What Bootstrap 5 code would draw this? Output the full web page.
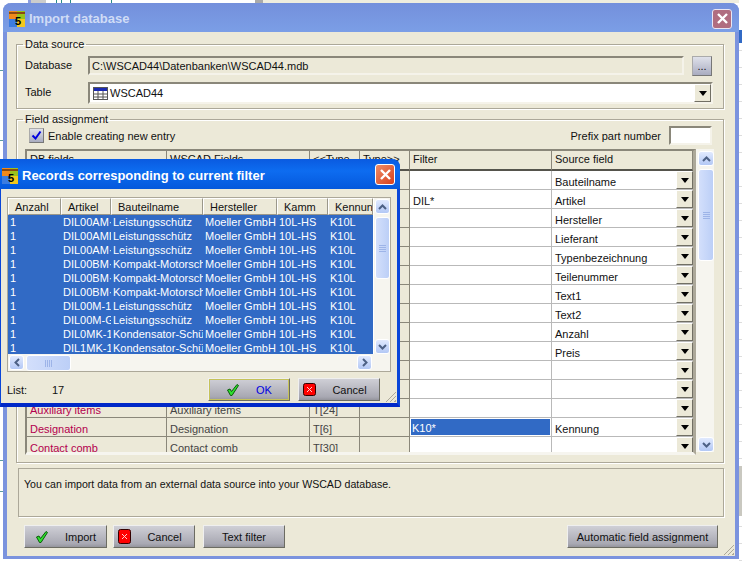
<!DOCTYPE html>
<html lang="en">
<head>
  <meta charset="UTF-8" />
  <title>Import database</title>
  <link href="https://cdn.jsdelivr.net/npm/bootstrap@5.3.0/dist/css/bootstrap.min.css" rel="stylesheet" />
  <style>
    html, body { height: 562px; overflow: hidden; }
    body { position: relative; background: #fff; font: 11px/14px "Liberation Sans", Arial, sans-serif; color: #111; }
    .back-top { position: absolute; left: 0; top: 0; width: 742px; height: 3px; background: linear-gradient(90deg, #fff 28px, #8d9ee0 28px 31px, #ccc 31px 46px, #fff 46px 56px, #2a8a8a 56px 57px, #fff 57px 61px, #2a8a8a 61px 62px, #fff 62px 70px, #2a8a8a 70px 71px, #fff 71px 111px, #2a8a8a 111px 112px, #fff 112px 255px, #aaa 255px 263px, #efedde 263px); }
    .back-right { position: absolute; left: 739px; top: 0; width: 3px; height: 562px; background: linear-gradient(#fff 30px, #316ac5 30px 43px, transparent 43px), linear-gradient(transparent 466px, #c9c8c0 466px 516px, transparent 516px), repeating-linear-gradient(#fff 0 16px, #ddd 16px 17px); }
    .back-left { position: absolute; left: 0; top: 0; width: 3px; height: 562px; background: linear-gradient(transparent 70px, #5a9aa0 70px 71px, transparent 71px 140px, #5a9aa0 140px 141px, transparent 141px 460px, #5a9aa0 460px 461px, transparent 461px 491px, #5a9aa0 491px 492px, transparent 492px); }
    .main-win { position: absolute; left: 3px; top: 3px; width: 736px; height: 556px; background: #ece9d8; border: solid #7b93de; border-width: 0 4px 3px; border-radius: 8px 8px 0 0; }
    .main-title { height: 29px; margin: 0 -4px; padding: 2px 6px 0; background: linear-gradient(#7490dc, #7b9ee6); border-radius: 8px 8px 0 0; color: #d0dcf6; font: bold 13px "Liberation Sans", sans-serif; }
    .close-dim { width: 20px; height: 20px; background: #b06d80; border: 1px solid #e9e6f4; border-radius: 3px; margin-right: 1px; }
    .close-hot { width: 20px; height: 21px; background: linear-gradient(135deg, #ee8d68, #d8401c); border: 1px solid #fff; border-radius: 3px; margin: -3px 2px 0 0; }
    .group-box { position: relative; border: 1px solid #aca899; box-shadow: inset 1px 1px #fff, 1px 1px #fff; min-width: 0; }
    .group-box > legend { float: none; width: auto; font: inherit; margin: 0 0 0 -2px; padding: 0 2px; }
    .source-box { margin: 5px 11px 0 9px; height: 72px; padding: 5px 10px 0 8px; }
    .fields-box { margin: 3px 11px 0 9px; height: 351px; padding: 0 9px 0 8px; }
    .info-box { margin: 5px 11px 0 11px; height: 49px; padding: 8px 5px; border: 1px solid #aca899; box-shadow: 1px 1px #fff; font-size: 10.600px; }
    .field-label { width: 63px; flex-shrink: 0; margin-top: -3px; }
    .table-row { margin-top: 6px; }
    .sunken { border: 2px solid; border-color: #8a877a #f5f3ea #f5f3ea #8a877a; padding: 0 1px; }
    .db-path { height: 19px; margin-bottom: 1px; padding-left: 2px; }
    .table-pick { height: 22px; padding-left: 3px; padding-right: 0; gap: 2px; }
    .sys-btn { background: linear-gradient(#dfe1ea, #a9acc0); border: 1px solid #aaa; border-right-color: #777; border-bottom-color: #777; }
    .dots-btn { width: 20px; height: 20px; margin-left: 8px; margin-right: 1px; }
    .tick-box { width: 15px; height: 15px; }
    .prefix-box { width: 43px; height: 19px; margin-right: 2px; }
    .drop-btn { width: 17px; flex-shrink: 0; background: #ece9d8; border: 1px solid; border-color: #fff #716f64 #716f64 #fff; }
    .drop-btn::after { content: ""; border: 4px solid transparent; border-top: 5px solid #000; border-bottom: 0; }
    .grid-view { width: 671px; height: 306px; flex-shrink: 0; overflow: hidden; border-left: 2px solid #8a877a; border-top: 2px solid #8a877a; border-right: 3px solid #aca899; border-bottom: 3px solid #f6f5ef; background: #ece9d8; }
    .grid-table { table-layout: fixed; border-collapse: separate; border-spacing: 0; width: 666px; background: #fff; }
    .grid-table th { height: 20px; background: #ece9d8; font-weight: 400; border-right: 1px solid #8a877a; border-bottom: 2px solid #55544c; padding: 0 3px 3px; white-space: nowrap; }
    .grid-table td { height: 19px; padding: 4px 3px 0; vertical-align: top; border-right: 1px solid #b9b9b9; border-bottom: 1px solid #b9b9b9; white-space: nowrap; overflow: hidden; }
    .grid-table td.fixed-cell { background: #ece9d8; border-color: #8a877a; color: #444; }
    .grid-table td.db-cell { color: #b3004d; }
    .grid-table td.pick-cell { padding: 0; border-right: 0; }
    .grid-table td.hit-cell { padding: 1px 1px 0 1px; }
    .hit-text { display: block; background: #316ac5; color: #fff; height: 16px; line-height: 18px; padding-left: 1px; }
    .pick-box { height: 18px; padding-left: 3px; }
    .pick-box > span:first-child { padding-top: 4px; }
    .v-bar { width: 18px; background: #f6f5ef; padding: 2px 0 0 2px; }
    .main-bar { height: 303px; }
    .bar-arrow { height: 15px; flex-shrink: 0; background: linear-gradient(#e1eafe, #b3c8f5); border: 1px solid #fff; border-radius: 3px; }
    .bar-thumb { background: linear-gradient(90deg, #d3dffb, #bccff7); border: 1px solid #fff; border-radius: 3px; margin-top: 3px; }
    .win-btn { height: 23px; background: linear-gradient(#cfcfd6, #a8a8b2 85%, #94949c); border: 1px solid; border-color: #efefef #6c6c62 #6c6c62 #efefef; padding: 0; font-size: 11px; color: #111; border-radius: 0; }
    .win-btn.is-default { box-shadow: inset 0 0 0 1px #c5c25a; color: #0000e0; }
    .foot-row { padding: 8px 17px 0 17px; }
    .tight-left { margin-left: -2px; }
    .shift-left { padding-right: 8px; }
    .dialog-win { position: absolute; left: 0; top: 159px; width: 400px; height: 248px; background: #ece9d8; border: solid #0a46d8; border-width: 0 3px 4px 1px; border-bottom-color: #0028c8; border-radius: 0 8px 0 0; }
    .dialog-title { height: 30px; padding: 3px 3px 0 2px; margin: 0 -3px 0 -1px; background: linear-gradient(#0a5ae0, #0d6cf0 40%, #0458dc); border-radius: 0 8px 0 0; color: #fff; font: bold 13px "Liberation Sans", sans-serif; }
    .records-box { margin: 8px 6px 0 6px; height: 175px; background: #fff; border: 1px solid #aca899; }
    .records-top { height: 156px; }
    .records-view { width: 366px; overflow: hidden; }
    .records-table { table-layout: fixed; border-collapse: separate; border-spacing: 0; width: 365px; color: #fff; background: #316ac5; }
    .records-table th { height: 17px; background: #ece9d8; color: #111; font-weight: 400; border: 1px solid; border-color: #fff #9a978a #9a978a #fff; padding: 0 0 0 6px; white-space: nowrap; overflow: hidden; }
    .records-table td { height: 14px; padding: 0 0 0 2px; white-space: nowrap; overflow: hidden; }
    .records-bar { padding: 1px 0 0 1px; width: 16px; }
    .h-bar { height: 17px; padding: 1px 18px 0 1px; background: #f6f5ef; }
    .h-arrow { width: 15px; height: 15px; }
    .h-thumb { width: 45px; margin: 0 0 0 2px; }
    .dialog-foot { padding: 6px 17px 0 6px; }
    .list-count { width: 45px; }
    .grip { position: absolute; right: 1px; bottom: 1px; width: 11px; height: 11px; background: repeating-linear-gradient(135deg, transparent 0 2px, #aca899 2px 3px); clip-path: polygon(100% 0, 100% 100%, 0 100%); }
    .w-82 { width: 82px; }
  </style>
</head>
<body>
  <div class="back-top"></div>
  <div class="back-right"></div>
  <div class="back-left"></div>

  <div class="main-win">
    <div class="main-title d-flex align-items-center gap-1">
      <svg width="16" height="16" viewBox="0 0 16 16"><rect width="8" height="8" fill="#f08a1c"/><rect x="8" width="8" height="8" fill="#9ac21c"/><rect y="8" width="8" height="8" fill="#3c7ce0"/><rect x="8" y="8" width="8" height="8" fill="#f4c81c"/><rect y="1" width="16" height="2" fill="#8a4a10"/><text x="9" y="14" font-size="11" font-weight="700" text-anchor="middle" font-family="Liberation Sans">5</text></svg>
      <span class="flex-grow-1">Import database</span>
      <span class="close-dim d-flex align-items-center justify-content-center">
        <svg width="11" height="11" viewBox="0 0 11 11"><path d="M1 1l9 9M10 1l-9 9" stroke="#fff" stroke-width="2.400"/></svg>
      </span>
    </div>

    <fieldset class="group-box source-box">
      <legend>Data source</legend>
      <div class="d-flex align-items-center">
        <span class="field-label">Database</span>
        <div class="sunken db-path flex-grow-1 d-flex align-items-center">C:\WSCAD44\Datenbanken\WSCAD44.mdb</div>
        <span class="sys-btn dots-btn d-flex align-items-center justify-content-center">...</span>
      </div>
      <div class="table-row d-flex align-items-center">
        <span class="field-label">Table</span>
        <div class="sunken table-pick flex-grow-1 d-flex align-items-center bg-white">
          <svg width="15" height="13" viewBox="0 0 15 13"><rect x=".5" y=".5" width="14" height="12" fill="#fff" stroke="#555"/><rect x="1" y="1" width="13" height="3" fill="#1c2ab0"/><path d="M1 7h13M1 10h13M5 4v8M10 4v8" stroke="#555"/></svg>
          <span class="flex-grow-1">WSCAD44</span>
          <span class="drop-btn d-flex align-items-center justify-content-center align-self-stretch"></span>
        </div>
      </div>
    </fieldset>

    <fieldset class="group-box fields-box">
      <legend>Field assignment</legend>
      <div class="d-flex align-items-center justify-content-between">
        <div class="d-flex align-items-center gap-1">
          <span class="sys-btn tick-box d-flex align-items-center justify-content-center ms-1">
            <svg width="11" height="11" viewBox="0 0 11 11"><path d="M1.500 5.500l3 3 5-7" fill="none" stroke="#0000e0" stroke-width="2"/></svg>
          </span>
          <span>Enable creating new entry</span>
        </div>
        <div class="d-flex align-items-center gap-2">
          <span>Prefix part number</span>
          <span class="sunken prefix-box bg-white"></span>
        </div>
      </div>
      <div class="d-flex mt-1">
        <div class="grid-view">
          <table class="grid-table">
            <colgroup><col style="width:140px"><col style="width:143px"><col style="width:50px"><col style="width:50px"><col style="width:142px"><col style="width:141px"></colgroup>
            <thead><tr><th>DB fields</th><th>WSCAD Fields</th><th>&lt;&lt;Type</th><th>Type&gt;&gt;</th><th>Filter</th><th>Source field</th></tr></thead>
            <tbody id="gridRows"></tbody>
          </table>
        </div>
        <div class="v-bar main-bar d-flex flex-column">
          <div class="bar-arrow d-flex align-items-center justify-content-center"><svg width="9" height="6" viewBox="0 0 9 6"><path d="M1 5l3.500-3.500L8 5" fill="none" stroke="#4d6185" stroke-width="2"/></svg></div>
          <div class="bar-thumb d-flex align-items-center justify-content-center" style="height:92px"><svg width="7" height="7" viewBox="0 0 7 7"><path d="M0 .5h7M0 2.500h7M0 4.500h7M0 6.500h7" stroke="#9db4e8"/></svg></div>
          <div class="flex-grow-1"></div>
          <div class="bar-arrow d-flex align-items-center justify-content-center"><svg width="9" height="6" viewBox="0 0 9 6"><path d="M1 1l3.500 3.500L8 1" fill="none" stroke="#4d6185" stroke-width="2"/></svg></div>
        </div>
      </div>
    </fieldset>

    <div class="info-box">You can import data from an external data source into your WSCAD database.</div>

    <div class="foot-row d-flex gap-2">
      <button type="button" class="win-btn d-flex align-items-center justify-content-center gap-3" style="width:83px">
        <svg width="14" height="14" viewBox="0 0 14 14"><path d="M1.500 7l2.500-1 1.500 2.500L11 1.500l1.500 1L6 12.500h-1.500z" fill="#2ee02e" stroke="#0a5a0a"/></svg>Import
      </button>
      <button type="button" class="win-btn w-82 tight-left shift-left d-flex align-items-center justify-content-center gap-3">
        <svg width="13" height="15" viewBox="0 0 13 15"><rect x=".5" y=".5" width="12" height="14" rx="2" fill="#f00" stroke="#300"/><path d="M4 5l5 5M9 5l-5 5" stroke="#fcc"/></svg>Cancel
      </button>
      <button type="button" class="win-btn w-82">Text filter</button>
      <button type="button" class="win-btn ms-auto" style="width:151px">Automatic field assignment</button>
    </div>
    <span class="grip"></span>
  </div>

  <div class="dialog-win">
    <div class="dialog-title d-flex align-items-center gap-1">
      <svg width="16" height="16" viewBox="0 0 16 16"><rect width="8" height="8" fill="#f08a1c"/><rect x="8" width="8" height="8" fill="#9ac21c"/><rect y="8" width="8" height="8" fill="#3c7ce0"/><rect x="8" y="8" width="8" height="8" fill="#f4c81c"/><rect y="1" width="16" height="2" fill="#8a4a10"/><text x="9" y="14" font-size="11" font-weight="700" text-anchor="middle" font-family="Liberation Sans">5</text></svg>
      <span class="flex-grow-1">Records corresponding to current filter</span>
      <span class="close-hot d-flex align-items-center justify-content-center">
        <svg width="11" height="11" viewBox="0 0 11 11"><path d="M1 1l9 9M10 1l-9 9" stroke="#fff" stroke-width="2.400"/></svg>
      </span>
    </div>
    <div class="records-box d-flex flex-column">
      <div class="records-top d-flex">
        <div class="records-view">
          <table class="records-table">
            <colgroup><col style="width:53px"><col style="width:50px"><col style="width:92px"><col style="width:74px"><col style="width:51px"><col style="width:45px"></colgroup>
            <thead><tr><th>Anzahl</th><th>Artikel</th><th>Bauteilname</th><th>Hersteller</th><th>Kamm</th><th>Kennun</th></tr></thead>
            <tbody id="recordRows"></tbody>
          </table>
        </div>
        <div class="v-bar records-bar d-flex flex-column">
          <div class="bar-arrow d-flex align-items-center justify-content-center"><svg width="9" height="6" viewBox="0 0 9 6"><path d="M1 5l3.500-3.500L8 5" fill="none" stroke="#4d6185" stroke-width="2"/></svg></div>
          <div class="bar-thumb d-flex align-items-center justify-content-center" style="height:62px"><svg width="7" height="7" viewBox="0 0 7 7"><path d="M0 .5h7M0 2.500h7M0 4.500h7M0 6.500h7" stroke="#9db4e8"/></svg></div>
          <div class="flex-grow-1"></div>
          <div class="bar-arrow d-flex align-items-center justify-content-center"><svg width="9" height="6" viewBox="0 0 9 6"><path d="M1 1l3.500 3.500L8 1" fill="none" stroke="#4d6185" stroke-width="2"/></svg></div>
        </div>
      </div>
      <div class="h-bar d-flex">
        <div class="bar-arrow h-arrow d-flex align-items-center justify-content-center"><svg width="6" height="9" viewBox="0 0 6 9"><path d="M5 1L1.500 4.500 5 8" fill="none" stroke="#4d6185" stroke-width="2"/></svg></div>
        <div class="bar-thumb h-thumb d-flex align-items-center justify-content-center"><svg width="7" height="7" viewBox="0 0 7 7"><path d="M.5 0v7M2.500 0v7M4.500 0v7M6.500 0v7" stroke="#9db4e8"/></svg></div>
        <div class="flex-grow-1"></div>
        <div class="bar-arrow h-arrow d-flex align-items-center justify-content-center"><svg width="6" height="9" viewBox="0 0 6 9"><path d="M1 1l3.500 3.500L1 8" fill="none" stroke="#4d6185" stroke-width="2"/></svg></div>
      </div>
    </div>
    <div class="dialog-foot d-flex align-items-center">
      <span class="list-count">List:</span>
      <span class="flex-grow-1">17</span>
      <button type="button" class="win-btn is-default d-flex align-items-center justify-content-center gap-3 me-2" style="width:82px">
        <svg width="14" height="14" viewBox="0 0 14 14"><path d="M1.500 7l2.500-1 1.500 2.500L11 1.500l1.500 1L6 12.500h-1.500z" fill="#2ee02e" stroke="#0a5a0a"/></svg>OK
      </button>
      <button type="button" class="win-btn w-82 shift-left d-flex align-items-center justify-content-center gap-3">
        <svg width="13" height="13" viewBox="0 0 13 13"><rect x=".5" y=".5" width="12" height="12" rx="2" fill="#f00" stroke="#300"/><path d="M4 4l5 5M9 4l-5 5" stroke="#fcc"/></svg>Cancel
      </button>
    </div>
    <span class="grip"></span>
  </div>

  <script src="https://cdn.jsdelivr.net/npm/bootstrap@5.3.0/dist/js/bootstrap.bundle.min.js"></script>
  <script>
    const sources = ["Bauteilname", "Artikel", "Hersteller", "Lieferant", "Typenbezeichnung", "Teilenummer", "Text1", "Text2", "Anzahl", "Preis", "", "", "", "Kennung", ""];
    const dbFields = { 12: ["Auxiliary items", "T[24]"], 13: ["Designation", "T[6]"], 14: ["Contact comb", "T[30]"] };

    document.getElementById("gridRows").innerHTML = sources.map((src, i) => {
      const db = dbFields[i] || ["", ""];
      let filter = `<td></td>`;
      if (i === 1) filter = `<td>DIL*</td>`;
      if (i === 13) filter = `<td class="hit-cell"><span class="hit-text">K10*</span></td>`;
      return `<tr><td class="fixed-cell db-cell">${db[0]}</td><td class="fixed-cell">${db[0]}</td><td class="fixed-cell">${db[1]}</td><td class="fixed-cell"></td>${filter}<td class="pick-cell"><div class="pick-box d-flex justify-content-between"><span>${src}</span><span class="drop-btn d-flex align-items-center justify-content-center"></span></div></td></tr>`;
    }).join("");

    const records = [
      ["DIL00AM·", "Leistungsschütz"], ["DIL00AMI", "Leistungsschütz"], ["DIL00AM·", "Leistungsschütz"],
      ["DIL00BM·", "Kompakt-Motorsch"], ["DIL00BM·", "Kompakt-Motorsch"], ["DIL00BM·", "Kompakt-Motorsch"],
      ["DIL00M-1", "Leistungsschütz"], ["DIL00M-G", "Leistungsschütz"], ["DIL0MK-1", "Kondensator-Schü"], ["DIL1MK-1", "Kondensator-Schü"]
    ];
    document.getElementById("recordRows").innerHTML = records.map(r =>
      `<tr><td>1</td><td>${r[0]}</td><td>${r[1]}</td><td>Moeller GmbH</td><td>10L-HS</td><td>K10L</td></tr>`
    ).join("");
  </script>
</body>
</html>
